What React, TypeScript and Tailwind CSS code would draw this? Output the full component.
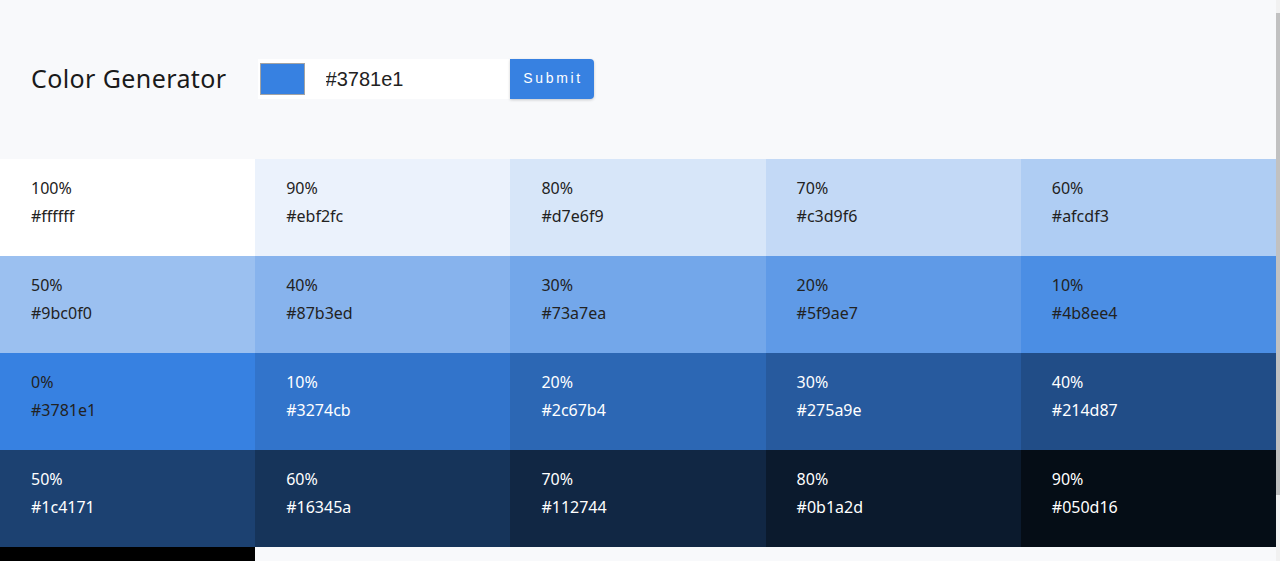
import React from 'react';

const BASE = '#3781e1';

// tints first, then the base, then shades
const COLORS: { weight: string; hex: string }[] = [
  { weight: '100%', hex: '#ffffff' },
  { weight: '90%', hex: '#ebf2fc' },
  { weight: '80%', hex: '#d7e6f9' },
  { weight: '70%', hex: '#c3d9f6' },
  { weight: '60%', hex: '#afcdf3' },
  { weight: '50%', hex: '#9bc0f0' },
  { weight: '40%', hex: '#87b3ed' },
  { weight: '30%', hex: '#73a7ea' },
  { weight: '20%', hex: '#5f9ae7' },
  { weight: '10%', hex: '#4b8ee4' },
  { weight: '0%', hex: '#3781e1' },
  { weight: '10%', hex: '#3274cb' },
  { weight: '20%', hex: '#2c67b4' },
  { weight: '30%', hex: '#275a9e' },
  { weight: '40%', hex: '#214d87' },
  { weight: '50%', hex: '#1c4171' },
  { weight: '60%', hex: '#16345a' },
  { weight: '70%', hex: '#112744' },
  { weight: '80%', hex: '#0b1a2d' },
  { weight: '90%', hex: '#050d16' },
  { weight: '100%', hex: '#000000' },
];

function SingleColor({ weight, hex, index }: { weight: string; hex: string; index: number }) {
  const dark = index > 10;
  return (
    <article
      className={`h-[97px] pl-[31px] pt-[17px] text-base leading-6 ${dark ? 'text-white' : 'text-[#222]'}`}
      style={{ backgroundColor: hex }}
    >
      <p>{weight}</p>
      <p className="mt-1">{hex}</p>
    </article>
  );
}

export default function App() {
  return (
    <div className="h-[561px] flex bg-[#f8f9fb] font-['Noto_Sans',sans-serif]">
      <main className="flex-1 overflow-y-auto [scrollbar-width:none]">
        {/* Header with form */}
        <section className="h-[159px] flex items-center pl-[31px]">
          <h3 className="text-[25px] text-[#1a1a1a] tracking-[0.4px] pb-[1px]">Color Generator</h3>
          <form className="ml-[31px] flex h-10 -mt-[2px]" onSubmit={e => e.preventDefault()}>
            <div className="flex items-center bg-white w-[252px] pl-[2px]">
              <div className="w-[45px] h-[32px] border border-[#a3a3a3]" style={{ backgroundColor: BASE }} />
              <input
                type="text"
                defaultValue={BASE}
                className="ml-[21px] w-[170px] bg-transparent outline-none text-[20px] text-[#222] font-['Liberation_Sans',Arial,sans-serif]"
              />
            </div>
            <button
              type="submit"
              className="w-[84px] bg-[#3781e1] text-white text-[14px] tracking-[2.7px] pl-[3px] rounded-r-[4px] shadow-[0_1px_3px_rgba(0,0,0,0.2)] font-['Liberation_Sans',Arial,sans-serif]"
            >
              Submit
            </button>
          </form>
        </section>

        {/* Colour tiles */}
        <section className="grid grid-cols-5">
          {COLORS.map((c, i) => (
            <SingleColor key={i} weight={c.weight} hex={c.hex} index={i} />
          ))}
        </section>
      </main>

      {/* Thin scrollbar track */}
      <aside className="w-[4px] bg-[#f1f1f1] flex flex-col pt-[13px]">
        <div className="h-[482px] bg-[#c1c1c1]" />
      </aside>
    </div>
  );
}
